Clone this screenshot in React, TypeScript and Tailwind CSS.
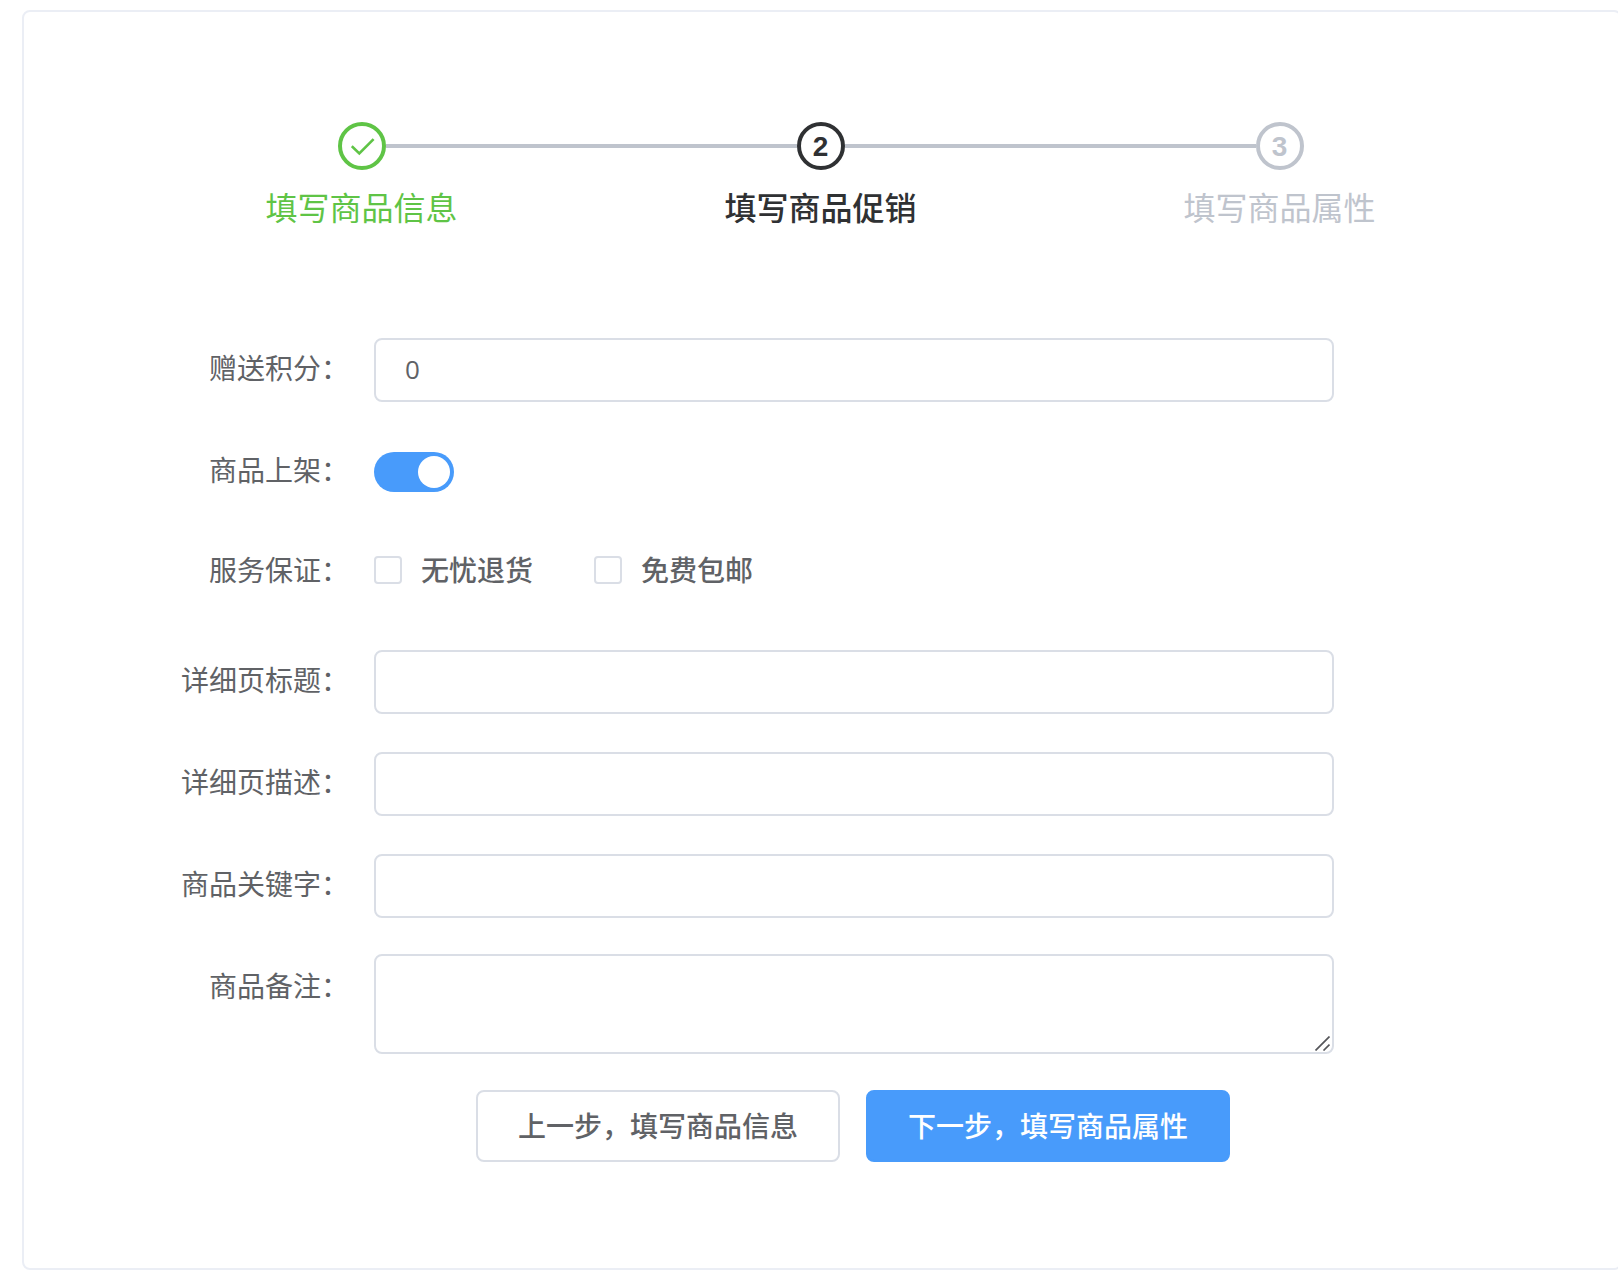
import { useState, type ReactNode } from "react";

type StepState = "done" | "active" | "waiting";

const STEPS: { title: string; state: StepState }[] = [
  { title: "填写商品信息", state: "done" },
  { title: "填写商品促销", state: "active" },
  { title: "填写商品属性", state: "waiting" },
];

const STEP_COLORS: Record<StepState, string> = {
  done: "text-[#5fc446]",
  active: "text-[#2f3133] font-medium",
  waiting: "text-[#bfc4cd]",
};

const INPUT =
  "block h-16 w-full rounded-lg border-2 border-[#dadee6] bg-white px-[29px] pb-0.5 font-['Open_Sans','Noto_Sans_CJK_SC',sans-serif] text-[26px] text-[#606266] outline-none focus:border-[#489bfb]";

function CheckIcon() {
  return (
    <svg className="ml-0.5 h-6 w-6" viewBox="0 0 24 24" fill="none" aria-hidden="true">
      <path d="M0.8 11.2 8.3 18.4 22.6 4.2" stroke="currentColor" strokeWidth="2.6" />
    </svg>
  );
}

function Steps() {
  return (
    <ol className="-ml-0.5 mr-px flex">
      {STEPS.map((step, i) => (
        <li
          key={step.title}
          className={`flex flex-1 flex-col items-center ${STEP_COLORS[step.state]}`}
        >
          <div className="flex w-full items-center">
            <span className={`h-1 flex-1 ${i > 0 ? "bg-[#bfc4cd]" : ""}`} />
            <span className="flex h-12 w-12 items-center justify-center rounded-full border-4 border-current pt-0.5 font-['Liberation_Sans',sans-serif] text-[28px] leading-none font-bold">
              {step.state === "done" ? <CheckIcon /> : i + 1}
            </span>
            <span className={`h-1 flex-1 ${i < STEPS.length - 1 ? "bg-[#bfc4cd]" : ""}`} />
          </div>
          <span className="text-[32px] leading-[72px] whitespace-nowrap">{step.title}</span>
        </li>
      ))}
    </ol>
  );
}

interface RowProps {
  label: string;
  htmlFor?: string;
  leading?: string;
  children: ReactNode;
}

function Row({ label, htmlFor, leading = "leading-[58px]", children }: RowProps) {
  return (
    <div className="flex items-start">
      <label htmlFor={htmlFor} className={`w-[240px] shrink-0 pr-[25px] text-right ${leading}`}>
        {label}
      </label>
      <div className="min-w-0 flex-1">{children}</div>
    </div>
  );
}

function Service({ label }: { label: string }) {
  return (
    <label className="flex items-center gap-[19px] font-medium">
      <input
        type="checkbox"
        className="h-7 w-7 appearance-none rounded-sm border-2 border-[#dadee6] bg-white checked:border-[#489bfb] checked:bg-[#489bfb]"
      />
      <span className="pb-0.5">{label}</span>
    </label>
  );
}

export default function App() {
  const [published, setPublished] = useState(true);

  return (
    <main className="overflow-hidden bg-white pt-2.5 pb-1.5 font-['Noto_Sans_CJK_SC',sans-serif] text-[28px] text-[#606266]">
      <section className="-mr-1 ml-[22px] rounded-lg border-2 border-[#ebeef5] pt-[110px] pr-[110px] pb-[106px] pl-[110px]">
        <Steps />
        <form className="mt-24 max-w-[1200px]" onSubmit={(e) => e.preventDefault()}>
          <div className="flex flex-col gap-[38px]">
            <Row label="赠送积分：" htmlFor="points">
              <input id="points" type="text" defaultValue="0" className={INPUT} />
            </Row>
            <Row label="商品上架：" htmlFor="published">
              <div className="flex h-16 items-center">
                <button
                  id="published"
                  type="button"
                  role="switch"
                  aria-checked={published}
                  onClick={() => setPublished(!published)}
                  className={`flex h-10 w-20 items-center rounded-full px-1 ${
                    published ? "justify-end bg-[#489bfb]" : "justify-start bg-[#dadee6]"
                  }`}
                >
                  <span className="h-8 w-8 rounded-full bg-white" />
                </button>
              </div>
            </Row>
          </div>
          <div className="mt-9 mb-[50px]">
            <Row label="服务保证：">
              <div className="flex h-[60px] gap-[61px]">
                <Service label="无忧退货" />
                <Service label="免费包邮" />
              </div>
            </Row>
          </div>
          <div className="flex flex-col gap-[38px]">
            <Row label="详细页标题：" htmlFor="detail-title">
              <input id="detail-title" type="text" className={INPUT} />
            </Row>
            <Row label="详细页描述：" htmlFor="detail-desc">
              <input id="detail-desc" type="text" className={INPUT} />
            </Row>
            <Row label="商品关键字：" htmlFor="keywords">
              <input id="keywords" type="text" className={INPUT} />
            </Row>
          </div>
          <div className="mt-9">
            <Row label="商品备注：" htmlFor="note" leading="leading-[62px]">
              <div className="relative">
                <textarea
                  id="note"
                  className="block h-[100px] w-full resize-none rounded-lg border-2 border-[#dadee6] bg-white px-[29px] py-2.5 text-[26px] outline-none focus:border-[#489bfb]"
                />
                <svg
                  className="pointer-events-none absolute right-1 bottom-[3px] h-[15px] w-[15px]"
                  viewBox="0 0 15 15"
                  stroke="#55565a"
                  strokeWidth="1.7"
                  aria-hidden="true"
                >
                  <path d="M0.5 14.5 14.5 0.5M8.5 14.5 14.5 8.5" />
                </svg>
              </div>
            </Row>
          </div>
          <div className="mt-9 flex justify-center gap-[26px] pl-[238px] font-medium">
            <button
              type="button"
              className="h-[72px] rounded-lg border-2 border-[#dadee6] bg-white px-10 pb-0.5 whitespace-nowrap"
            >
              上一步，填写商品信息
            </button>
            <button
              type="submit"
              className="h-[72px] rounded-lg border-2 border-[#489bfb] bg-[#489bfb] px-10 pb-0.5 whitespace-nowrap text-white"
            >
              下一步，填写商品属性
            </button>
          </div>
        </form>
      </section>
    </main>
  );
}
